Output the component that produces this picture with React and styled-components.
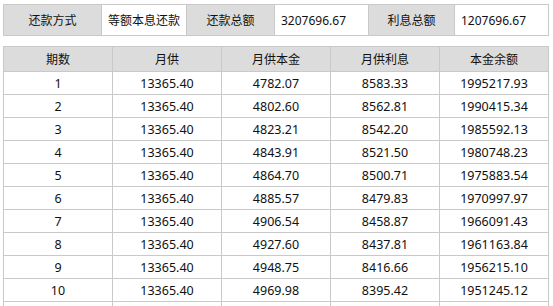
import styled, { createGlobalStyle } from "styled-components";

const GlobalStyle = createGlobalStyle`
  body {
    margin: 0;
    background: #ffffff;
    font-family: "Noto Sans", "Noto Sans CJK SC", sans-serif;
    color: #111111;
  }
`;

const Page = styled.div`
  padding: 4px 0 0 3px;
  width: 546px;
`;

const SummaryBar = styled.div`
  display: flex;
  border: 1px solid #c9c9c9;
  height: 30px;
`;

const SummaryCell = styled.div`
  width: ${(p) => p.$w}px;
  display: flex;
  align-items: center;
  justify-content: ${(p) => (p.$label ? "center" : "flex-start")};
  padding: ${(p) => (p.$label ? "0" : "0 6px")};
  box-sizing: border-box;
  background: ${(p) => (p.$label ? "#dcdcdc" : "#ffffff")};
  border-left: ${(p) => (p.$first ? "none" : "1px solid #c9c9c9")};
  font-size: 12px;
  white-space: nowrap;
`;

const Table = styled.table`
  margin-top: 10px;
  width: 546px;
  border-collapse: collapse;
  table-layout: fixed;
  font-size: 12.5px;
`;

const HeadCell = styled.th`
  height: 24px;
  padding: 0;
  background: #dcdcdc;
  border: 1px solid #c9c9c9;
  font-weight: normal;
  font-size: 12px;
  text-align: center;
`;

const Cell = styled.td`
  height: 22px;
  padding: 0;
  border: 1px solid #c9c9c9;
  text-align: center;
`;

const rows = [
  ["1", "13365.40", "4782.07", "8583.33", "1995217.93"],
  ["2", "13365.40", "4802.60", "8562.81", "1990415.34"],
  ["3", "13365.40", "4823.21", "8542.20", "1985592.13"],
  ["4", "13365.40", "4843.91", "8521.50", "1980748.23"],
  ["5", "13365.40", "4864.70", "8500.71", "1975883.54"],
  ["6", "13365.40", "4885.57", "8479.83", "1970997.97"],
  ["7", "13365.40", "4906.54", "8458.87", "1966091.43"],
  ["8", "13365.40", "4927.60", "8437.81", "1961163.84"],
  ["9", "13365.40", "4948.75", "8416.66", "1956215.10"],
  ["10", "13365.40", "4969.98", "8395.42", "1951245.12"],
  ["11", "13365.40", "4991.31", "8374.09", "1946253.81"],
];

const App = () => {
  return (
    <Page>
      <GlobalStyle />
      <SummaryBar>
        <SummaryCell $label $first $w={97}>还款方式</SummaryCell>
        <SummaryCell $w={85}>等额本息还款</SummaryCell>
        <SummaryCell $label $w={88}>还款总额</SummaryCell>
        <SummaryCell $w={94}>3207696.67</SummaryCell>
        <SummaryCell $label $w={86}>利息总额</SummaryCell>
        <SummaryCell $w={94}>1207696.67</SummaryCell>
      </SummaryBar>
      <Table>
        <thead>
          <tr>
            <HeadCell>期数</HeadCell>
            <HeadCell>月供</HeadCell>
            <HeadCell>月供本金</HeadCell>
            <HeadCell>月供利息</HeadCell>
            <HeadCell>本金余额</HeadCell>
          </tr>
        </thead>
        <tbody>
          {rows.map((r) => (
            <tr key={r[0]}>
              {r.map((v, i) => (
                <Cell key={i}>{v}</Cell>
              ))}
            </tr>
          ))}
        </tbody>
      </Table>
    </Page>
  );
};

export default App;
